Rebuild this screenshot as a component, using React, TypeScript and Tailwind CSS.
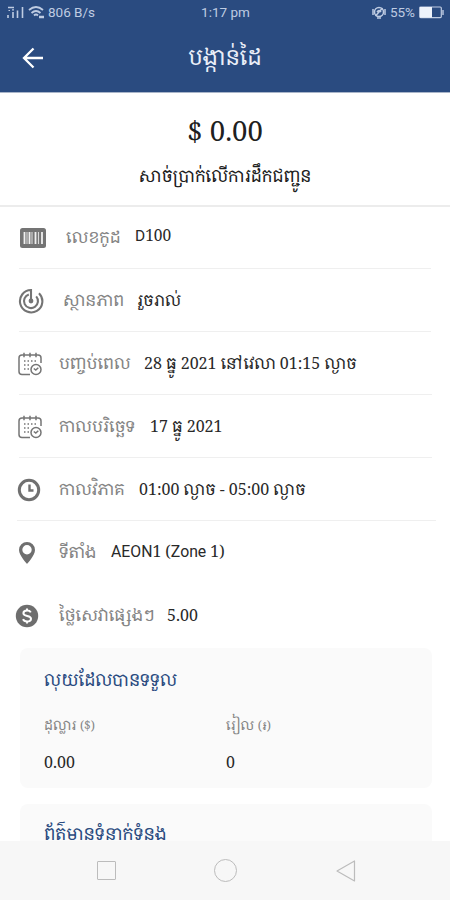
import type { ReactNode } from 'react';

const serif = "font-['Noto_Serif_Khmer','Noto_Sans_Khmer','DejaVu_Serif_Condensed','DejaVu_Serif',serif]";

function BarcodeIcon() {
  return (
    <svg width="28" height="22" viewBox="0 0 28 22">
      <rect x="1" y="1" width="26" height="20" rx="2.500" fill="#747474" />
      <path d="M5.500 5v12M10.500 5v12M16.500 5v12M23 5v12" stroke="#f0f0f0" strokeWidth="1.800" />
      <path d="M8 5v12M13 5v12M19.500 5v12" stroke="#d8d8d8" strokeWidth="1.100" />
    </svg>
  );
}

function RadarIcon() {
  return (
    <svg width="26" height="26" viewBox="0 0 26 26" fill="none" stroke="#747474" strokeWidth="2.100">
      <path d="M13 13V2A11.200 11.200 0 1 0 21 5.200" />
      <path d="M10.800 6.400a7 7 0 1 0 7.400 2" />
      <circle cx="13" cy="13" r="2.400" fill="#747474" stroke="none" />
    </svg>
  );
}

function CalendarIcon() {
  return (
    <svg width="24" height="24" viewBox="0 0 24 24" fill="none" stroke="#757575" strokeWidth="1.500">
      <path d="M12 22.500H4a3 3 0 0 1-3-3V6a3 3 0 0 1 3-3h16a3 3 0 0 1 3 3v5M6 .8v4.400M12 .8v4.400M18 .8v4.400" />
      <path d="M6 9h13M6 13h7M6 17h6" strokeDasharray="1.500 2" />
      <circle cx="18" cy="17.500" r="5" />
      <path d="M15.800 16.500l2 1.600 2.500-2.300" />
    </svg>
  );
}

function ClockIcon() {
  return (
    <svg width="24" height="24" viewBox="0 0 24 24" fill="none" stroke="#707070">
      <circle cx="12" cy="12" r="9.700" strokeWidth="3" />
      <path d="M12.500 6.500v6h4" strokeWidth="2.400" />
    </svg>
  );
}

function PinIcon() {
  return (
    <svg width="18" height="24" viewBox="0 0 18 24">
      <path fillRule="evenodd" fill="#6f6f6f" d="M9 1a8 8 0 0 0-8 8c0 5.500 8 14 8 14s8-8.500 8-14a8 8 0 0 0-8-8Zm0 3a4.700 4.700 0 1 1 0 9.400A4.700 4.700 0 0 1 9 4Z" />
    </svg>
  );
}

function DollarIcon() {
  return (
    <svg width="24" height="24" viewBox="0 0 24 24">
      <circle cx="12" cy="12" r="11.200" fill="#6e6e6e" />
      <path d="M15.800 8.400c-.7-1.300-2-1.900-3.700-1.900-2.200 0-3.700 1-3.700 2.700 0 3.800 7.600 1.700 7.600 5.500 0 1.800-1.600 2.800-3.900 2.800-2 0-3.500-.8-4.100-2.300M12 4.500v2.300M12 17.200v2.300" fill="none" stroke="#fff" strokeWidth="2" />
    </svg>
  );
}

// Latin letters are set in Roboto, digits stay in the serif face.
function Latin({ children }: { children: string }) {
  return <span className="font-['Roboto',sans-serif]">{children}</span>;
}

type RowProps = {
  icon: ReactNode;
  label: string;
  value: ReactNode;
  iconPad: string;
  labelBox: string;
  valueBox: string;
  line?: string;
};

function Row({ icon, label, value, iconPad, labelBox, valueBox, line }: RowProps) {
  return (
    <div className="flex h-[63px] shrink-0 flex-col">
      <div className="flex h-[61px] items-center whitespace-nowrap">
        <div className={`flex shrink-0 ${iconPad}`}>{icon}</div>
        <span className={`shrink-0 text-[16.6px] text-[#858585] ${labelBox}`}>{label}</span>
        <span className={`shrink-0 pb-[2px] text-[#292929] ${valueBox}`}>{value}</span>
      </div>
      {line && <div className={`h-px bg-[#efefef] ${line}`} />}
    </div>
  );
}

export default function App() {
  return (
    <div className={`flex h-[900px] w-[450px] flex-col overflow-hidden bg-white ${serif}`}>
      <header className="flex h-[93px] shrink-0 flex-col border-b border-[#a9b5c9] bg-[#2a4b80] text-[#e9eef8]">
        <div className="grid h-[25px] grid-cols-3 items-center pl-[7px] pr-[6px] font-['Roboto',sans-serif] text-[13.5px] text-[#bfcce2]">
          <div className="flex items-center gap-1">
            <svg width="17" height="13" viewBox="0 0 17 13" stroke="#bfcce2" strokeWidth="1.600">
              <path d="M1 9v3M6 6v6M10.500 4.500v7.500M15.500 1v11M1 1.500h6" />
              <path d="M1.500 4.500h1.500M5 3.800h2" strokeWidth="1.200" />
            </svg>
            <svg width="17" height="13" viewBox="0 0 17 13" fill="none" stroke="#bfcce2" strokeWidth="1.800">
              <path d="M1 4q7-6 14 0M3.500 7q4.500-4 9 0M6 9.500q2-2 4 0" />
              <path d="M11 11h5" strokeWidth="2.500" />
            </svg>
            <span className="-ml-px">806 B/s</span>
          </div>
          <span className="text-center">1:17 pm</span>
          <div className="flex items-center justify-end gap-[4px]">
            <svg width="14" height="13" viewBox="0 0 14 13" fill="none" stroke="#bfcce2" strokeWidth="1.500">
              <circle cx="7" cy="6" r="4.500" />
              <path d="M3.500 10l7-8M1 3v6M13 3v6M5 12h4M5 6q2-3 4 0" />
            </svg>
            <span>55%</span>
            <svg width="25" height="13" viewBox="0 0 25 13">
              <rect x=".7" y="1" width="21.600" height="10.600" rx="1" fill="none" stroke="#bfcce2" strokeWidth="1.200" />
              <rect x="1" y="1" width="12" height="10.600" fill="#eef3fb" />
              <path d="M24 4v5" stroke="#bfcce2" strokeWidth="1.400" />
            </svg>
          </div>
        </div>
        <div className="grid h-[65px] grid-cols-[80px_1fr_80px] items-center">
          <svg className="ml-[22px]" width="22" height="22" viewBox="0 0 22 22" fill="none" stroke="#fff" strokeWidth="2.300">
            <path d="M21 11H2.500M11.500 1.500 2 11l9.500 9.500" />
          </svg>
          <h1 className="whitespace-nowrap pb-[3px] text-center text-[22px]">បង្កាន់ដៃ</h1>
        </div>
      </header>

      <section className="flex h-[114px] shrink-0 flex-col items-center border-b-2 border-[#ececec] pt-[20px] text-[#202020]">
        <div className="text-[27.5px] leading-[36px]">$ 0.00</div>
        <div className="mt-[10px] whitespace-nowrap text-[16.8px] leading-[34px]">សាច់ប្រាក់លើការដឹកជញ្ជូន</div>
      </section>

      <main className="flex min-h-0 flex-1 flex-col overflow-hidden text-[16px]">
        <Row icon={<BarcodeIcon />} label="លេខកូដ" value={<><Latin>D</Latin>100</>} iconPad="pl-[19px]" labelBox="ml-[19px] w-[55px]" valueBox="ml-[14px] text-[15.5px]" line="ml-[19px] mr-[19px]" />
        <Row icon={<RadarIcon />} label="ស្ថានភាព" value="រួចរាល់" iconPad="pl-[18px]" labelBox="ml-[19px] w-[60px]" valueBox="ml-[14px]" line="ml-[19px] mr-[19px]" />
        <Row icon={<CalendarIcon />} label="បញ្ចប់ពេល" value="28 ធ្នូ 2021 នៅវេលា 01:15 ល្ងាច" iconPad="pl-[18px]" labelBox="ml-[17px] w-[71px]" valueBox="ml-[14px]" line="ml-[19px] mr-[18px]" />
        <Row icon={<CalendarIcon />} label="កាលបរិច្ឆេទ" value="17 ធ្នូ 2021" iconPad="pl-[18px]" labelBox="ml-[17px] w-[77px]" valueBox="ml-[14px]" line="ml-[19px] mr-[18px]" />
        <Row icon={<ClockIcon />} label="កាលវិភាគ" value="01:00 ល្ងាច - 05:00 ល្ងាច" iconPad="pl-[17px]" labelBox="ml-[18px] w-[66px]" valueBox="ml-[14px]" line="ml-[17px] mr-[14px]" />
        <Row icon={<PinIcon />} label="ទីតាំង" value={<><Latin>AEON</Latin>1 (<Latin>Zone</Latin> 1)</>} iconPad="pl-[18px]" labelBox="ml-[23px] w-[38px]" valueBox="ml-[14px] text-[15.8px]" />
        <Row icon={<DollarIcon />} label="ថ្លៃសេវាផ្សេងៗ" value="5.00" iconPad="pl-[15px]" labelBox="ml-[20px] w-[94px]" valueBox="ml-[14px]" />

        <section className="ml-[20px] mr-[18px] h-[140px] shrink-0 rounded-lg bg-[#fafafa] px-[24px] pt-[17px]">
          <h2 className="whitespace-nowrap text-[17px] leading-[30px] text-[#2a4b80]">លុយដែលបានទទួល</h2>
          <div className="mt-[16px] grid grid-cols-2 text-[13.6px] leading-[28px] text-[#858585]">
            <span>ដុល្លារ <span className="text-[12px]">($)</span></span>
            <span>រៀល <span className="text-[12px]">(៛)</span></span>
          </div>
          <div className="mt-[8px] grid grid-cols-2 text-[16px] leading-[28px] text-[#292929]">
            <span>0.00</span>
            <span>0</span>
          </div>
        </section>
        <section className="ml-[20px] mr-[18px] mt-[16px] h-[140px] shrink-0 rounded-lg bg-[#fafafa] px-[24px] pt-[15px]">
          <h2 className="whitespace-nowrap text-[17.3px] leading-[30px] text-[#2a4b80]">ព័ត៌មានទំនាក់ទំនង</h2>
        </section>
      </main>

      <nav className="flex h-[59px] shrink-0 items-center bg-[#f7f7f7] pl-[97px]">
        <div className="h-[19px] w-[19px] rounded-[1px] border border-[#bcbcbc]" />
        <div className="ml-[98px] h-[23px] w-[23px] rounded-full border border-[#bcbcbc]" />
        <svg className="ml-[99px]" width="20" height="22" viewBox="0 0 20 22" fill="none" stroke="#bcbcbc" strokeWidth="1.200">
          <path d="M18.500 1v20L1 11Z" strokeLinejoin="round" />
        </svg>
      </nav>
    </div>
  );
}
